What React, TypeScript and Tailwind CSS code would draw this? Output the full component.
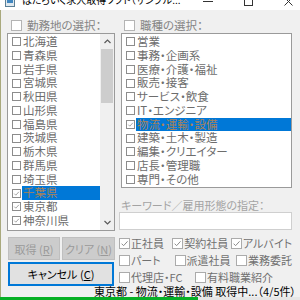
import React from "react";

const prefs = ["北海道", "青森県", "岩手県", "宮城県", "秋田県", "山形県", "福島県", "茨城県", "栃木県", "群馬県", "埼玉県", "千葉県", "東京都", "神奈川県"];
const prefChecked = ["千葉県", "東京都", "神奈川県"];
const jobs = ["営業", "事務・企画系", "医療・介護・福祉", "販売・接客", "サービス・飲食", "IT・エンジニア", "物流・運輸・設備", "建築・土木・製造", "編集・クリエイター", "店長・管理職", "専門・その他"];

function Box({ checked, cls }: { checked?: boolean; cls: string }) {
  return (
    <span className={`${cls} shrink-0 bg-white border flex items-center justify-center`}>
      {checked && (
        <svg viewBox="0 0 10 10" className="w-full h-full">
          <path d="M1.8 5.2 L4 7.4 L8.4 2.6" fill="none" stroke="#8a8a8a" strokeWidth="1.1" />
        </svg>
      )}
    </span>
  );
}

function Row({ label, checked, selected }: { label: string; checked?: boolean; selected?: boolean }) {
  return (
    <div className="h-[13.75px] flex items-center pl-[4px]">
      <Box checked={checked} cls="w-[9px] h-[9px] border-[#8c8c8c]" />
      <span
        className={`ml-[1px] flex-1 h-full pl-[1px] text-[11.5px] leading-[13.75px] whitespace-nowrap ${
          selected ? "bg-[#0078d7] text-[#a98258]" : "text-[#6d6d6d]"
        }`}
      >
        {label}
      </span>
    </div>
  );
}

function Opt({ label, checked, cls }: { label: string; checked?: boolean; cls: string }) {
  return (
    <div className={`${cls} flex items-center gap-[1px]`}>
      <Box checked={checked} cls="w-[11px] h-[11px] border-[#ababab]" />
      <span className="text-[11px] leading-[13px] text-[#707070] whitespace-nowrap">{label}</span>
    </div>
  );
}

export default function App() {
  return (
    <div className="w-[300px] h-[300px] bg-[#f0f0f0] flex flex-col overflow-hidden font-['Noto_Sans_CJK_JP',sans-serif] [font-feature-settings:'palt']">
      {/* title bar */}
      <div className="h-[10px] bg-white flex items-start overflow-hidden shrink-0">
        <svg className="ml-[5px] mt-[-3px] shrink-0" width="10" height="10" viewBox="0 0 10 10">
          <rect x="0.5" y="0.5" width="9" height="9" fill="#dfe8ee" stroke="#5a7f96" />
          <rect x="2" y="2" width="6" height="4" fill="#3f86c0" />
        </svg>
        <span className="ml-[7px] mt-[-6px] text-[10px] leading-[12px] text-black whitespace-nowrap">
          はたらいく求人取得ソフト（サンプル...
        </span>
        <span className="ml-[22px] mt-[1px] w-[10px] h-[1px] bg-[#333]" />
        <span className="ml-[31px] mt-[-3px] w-[9px] h-[9px] border border-[#333]" />
        <svg className="ml-[31px] mt-[-3px]" width="9" height="9" viewBox="0 0 9 9">
          <path d="M0.5 0.5 L8.5 8.5 M8.5 0.5 L0.5 8.5" stroke="#333" strokeWidth="1" />
        </svg>
      </div>

      <div className="flex-1 flex flex-col border-l border-[#a9a97d]">
        <div className="h-[276px] flex">
          {/* left column */}
          <div className="ml-[6px] w-[108px] flex flex-col">
            <div className="h-[23px] pt-[7px] flex items-center pl-[4px] gap-[5px]">
              <Box cls="w-[11px] h-[11px] border-[#b4b4b4]" />
              <span className="text-[11.5px] leading-[13px] text-[#858585]">勤務地の選択：</span>
            </div>
            <div className="h-[198px] border border-[#9a9a9a] bg-white flex">
              <div className="flex-1 flex flex-col pt-[1px] overflow-hidden">
                {prefs.map((p) => (
                  <Row key={p} label={p} checked={prefChecked.includes(p)} selected={p === "千葉県"} />
                ))}
              </div>
              <div className="w-[14px] bg-[#f0f0f0] flex flex-col">
                <div className="h-[15px] flex items-center justify-center">
                  <svg width="7" height="5" viewBox="0 0 7 5">
                    <path d="M0.5 4 L3.5 1 L6.5 4" fill="none" stroke="#5a5a5a" strokeWidth="1.2" />
                  </svg>
                </div>
                <div className="mx-[1px] h-[54px] bg-[#cdcdcd]" />
                <div className="flex-1" />
                <div className="h-[15px] flex items-center justify-center">
                  <svg width="7" height="5" viewBox="0 0 7 5">
                    <path d="M0.5 1 L3.5 4 L6.5 1" fill="none" stroke="#5a5a5a" strokeWidth="1.2" />
                  </svg>
                </div>
              </div>
            </div>
            <div className="mt-[6px] h-[23px] ml-[1px] flex gap-[2px]">
              <div className="w-[52px] h-full bg-[#cccccc] border border-[#bfbfbf] flex items-center justify-center text-[11px] text-[#9a9a9a] leading-[12px]">
                取得 (<span className="underline">R</span>)
              </div>
              <div className="w-[53px] h-full bg-[#cccccc] border border-[#bfbfbf] flex items-center justify-center text-[11px] text-[#9a9a9a] leading-[12px]">
                クリア (<span className="underline">N</span>)
              </div>
            </div>
            <div className="mt-[2px] ml-[1px] w-[106px] h-[24px] bg-[#e1e1e1] border-2 border-[#0078d7] flex items-center justify-center text-[11px] leading-[12px] text-black">
              キャンセル (<span className="underline">C</span>)
            </div>
          </div>

          {/* right column */}
          <div className="ml-[4px] w-[173px] flex flex-col">
            <div className="h-[23px] pt-[7px] flex items-center pl-[5px] gap-[5px]">
              <Box cls="w-[11px] h-[11px] border-[#b4b4b4]" />
              <span className="text-[11.5px] leading-[13px] text-[#858585]">職種の選択：</span>
            </div>
            <div className="ml-[2px] w-[171px] h-[155px] border border-[#9a9a9a] bg-white flex flex-col pt-[1px] overflow-hidden">
              {jobs.map((j) => (
                <Row key={j} label={j} checked={j === "物流・運輸・設備"} selected={j === "物流・運輸・設備"} />
              ))}
            </div>
            <div className="h-[24px] pt-[11px] pl-[2px] text-[11px] leading-[12px] text-[#a3a3a3] whitespace-nowrap">
              キーワード／雇用形態の指定：
            </div>
            <div className="h-[18px] w-[173px] bg-white border border-[#cfcfcf]" />
            <div className="mt-[4.5px] flex flex-col">
              <div className="h-[17px] flex items-center">
                <Opt cls="w-[56px]" label="正社員" checked />
                <Opt cls="w-[62px]" label="契約社員" checked />
                <Opt cls="" label="アルバイト" checked />
              </div>
              <div className="h-[17px] flex items-center">
                <Opt cls="w-[56px]" label="パート" />
                <Opt cls="w-[62px]" label="派遣社員" />
                <Opt cls="" label="業務委託" />
              </div>
              <div className="h-[17px] flex items-center">
                <Opt cls="w-[76px]" label="代理店・FC" />
                <Opt cls="" label="有料職業紹介" />
              </div>
            </div>
          </div>
        </div>
        <div className="h-[11px] flex justify-end pr-[4px] text-[11px] leading-[11px] text-black whitespace-nowrap">
          東京都 - 物流・運輸・設備 取得中...（4/5件）
        </div>
      </div>
      <div className="h-[3px] bg-[#e6e6e6] shrink-0">
        <div className="w-[198px] h-full bg-[#06b025]" />
      </div>
    </div>
  );
}
